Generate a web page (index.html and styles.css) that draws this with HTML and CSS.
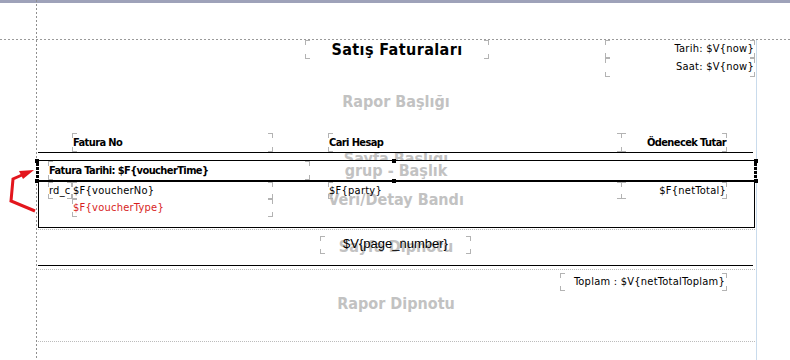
FILE: index.html
```html
<!DOCTYPE html>
<html lang="tr">
<head>
  <meta charset="UTF-8">
  <title>Satış Faturaları - Rapor Tasarımı</title>
  <link rel="stylesheet" href="styles.css">
</head>
<body>

<div class="designer">
  <div class="topbar"></div>

  <!-- kenar boşluğu kılavuzları -->
  <div class="guide guide-v"></div>
  <div class="guide guide-h"></div>

  <!-- grup bandı taşıma oku -->
  <svg class="move-arrow" width="40" height="60" viewBox="0 160 40 60">
    <polyline points="35,211 11,201 13,179 22,175" fill="none" stroke="#e3161d" stroke-width="3" stroke-linejoin="miter"/>
    <polygon points="34,170 19,171 23,179" fill="#e3161d"/>
  </svg>

  <div class="page">

    <!-- Rapor Başlığı -->
    <section class="band band-title">
      <div class="wm">Rapor Başlığı</div>
      <div class="fld f-title">Satış Faturaları</div>
      <div class="fld f-date1 right">Tarih: $V{now}</div>
      <div class="fld f-date2 right">Saat: $V{now}</div>
    </section>

    <!-- Sayfa Başlığı -->
    <section class="band band-pagehead">
      <div class="wm">Sayfa Başlığı</div>
      <div class="fld bold col-no">Fatura No</div>
      <div class="fld bold col-party">Cari Hesap</div>
      <div class="fld bold col-total right">Ödenecek Tutar</div>
      <div class="rule"></div>
    </section>

    <!-- grup - Başlık (seçili) -->
    <section class="band band-group">
      <div class="wm">grup - Başlık</div>
      <div class="fld bold f-group">Fatura Tarihi: $F{voucherTime}</div>
      <div class="sel">
        <span class="hd tl"></span><span class="hd tm"></span><span class="hd tr"></span>
        <span class="hd bl"></span><span class="hd bm"></span><span class="hd br"></span>
      </div>
    </section>

    <!-- Veri/Detay Bandı -->
    <section class="band band-detail">
      <div class="wm">Veri/Detay Bandı</div>
      <div class="fld f-rdc">rd_c</div>
      <div class="fld col-no">$F{voucherNo}</div>
      <div class="fld col-no f-type">$F{voucherType}</div>
      <div class="fld col-party">$F{party}</div>
      <div class="fld col-total right">$F{netTotal}</div>
    </section>

    <!-- Sayfa Dipnotu -->
    <section class="band band-pagefoot">
      <div class="wm">Sayfa Dipnotu</div>
      <div class="fld f-pageno">$V{page_number}</div>
      <div class="rule"></div>
    </section>

    <!-- Rapor Dipnotu -->
    <section class="band band-summary">
      <div class="wm">Rapor Dipnotu</div>
      <div class="fld f-sum right">Toplam : $V{netTotalToplam}</div>
    </section>

  </div>
</div>

</body>
</html>
```

FILE: styles.css
```css
body { margin: 0; background: #fff; font-family: "DejaVu Sans Condensed", "DejaVu Sans", sans-serif; }

.designer { position: relative; width: 790px; height: 360px; overflow: hidden; background: #fff; }
.topbar { height: 3px; background: #9ea2b9; }

.guide { position: absolute; }
.guide-v {
  left: 36px; top: 0; bottom: 0; width: 1px;
  background: repeating-linear-gradient(to bottom, #8f8f8f 0 2px, transparent 2px 4px);
}
.guide-h {
  left: 0; right: 0; top: 39px; height: 1px;
  background: repeating-linear-gradient(to right, #9a9a9a 0 2px, transparent 2px 4px);
}
.move-arrow { position: absolute; left: 0; top: 160px; z-index: 5; }

.page {
  margin: 37px 0 0 37px;
  width: 719px;
  height: 320px;
  border-right: 1px solid #c9dbec;
}

.band {
  position: relative;
  margin-left: 1px;
  width: 717px;
  box-sizing: border-box;
  background: #fff;
}
.band-title { height: 88px; }
.band-pagehead { height: 32px; }
.band-group { height: 22px; border-top: 1px solid #000; border-bottom: 2px solid #000; }
.band-detail { height: 46px; border: 1px solid #000; border-top: 0; }
.band-pagefoot { height: 40px; margin-top: 1px; border-top: 1px dotted #bcbcbc; }
.band-summary { height: 73px; border-top: 1px dotted #bcbcbc; border-bottom: 1px dotted #bcbcbc; }

/* bant adı filigranı */
.wm {
  position: absolute;
  left: -1px; right: 0;
  text-align: center;
  font: bold 16px/19px "DejaVu Sans Condensed", "DejaVu Sans", sans-serif;
  color: #c2c2c2;
  white-space: nowrap;
}
.band-title .wm { top: 52px; }
.band-pagehead .wm { top: 21px; }
.band-group .wm { top: 0; }
.band-detail .wm { top: 8px; }
.band-pagefoot .wm { top: 7px; }
.band-summary .wm { top: 24px; }

.rule { position: absolute; left: 0; width: 715px; height: 1px; background: #000; }
.band-pagehead .rule { top: 24px; }
.band-pagefoot .rule { top: 35px; }

/* rapor alanı: köşe işaretli kutu */
.fld {
  --m: #b3b3b3;
  position: absolute;
  height: 18px;
  box-sizing: border-box;
  padding: 0 1px;
  font-size: 11px;
  line-height: 18px;
  letter-spacing: 0.25px;
  color: #000;
  white-space: nowrap;
  overflow: hidden;
  background:
    linear-gradient(var(--m), var(--m)) left top / 5px 1px no-repeat,
    linear-gradient(var(--m), var(--m)) left top / 1px 5px no-repeat,
    linear-gradient(var(--m), var(--m)) right top / 5px 1px no-repeat,
    linear-gradient(var(--m), var(--m)) right top / 1px 5px no-repeat,
    linear-gradient(var(--m), var(--m)) left bottom / 5px 1px no-repeat,
    linear-gradient(var(--m), var(--m)) left bottom / 1px 5px no-repeat,
    linear-gradient(var(--m), var(--m)) right bottom / 5px 1px no-repeat,
    linear-gradient(var(--m), var(--m)) right bottom / 1px 5px no-repeat;
}
.fld.bold { font-weight: bold; letter-spacing: -0.6px; }
.fld.right { text-align: right; }

.f-title { left: 267px; top: 0; width: 184px; height: 19px; line-height: 19px; text-align: center; font-size: 16px; font-weight: bold; letter-spacing: 0.4px; }
.f-date1 { left: 567px; top: 0; width: 150px; }
.f-date2 { left: 567px; top: 18px; width: 150px; height: 19px; }

.band-pagehead .fld { top: 5px; height: 19px; line-height: 19px; }
.col-no { left: 34px; width: 201px; }
.col-party { left: 290px; width: 294px; }
.col-total { left: 583px; width: 106px; }

.f-group { left: 10px; top: 0; width: 262px; height: 19px; line-height: 19px; }

.band-detail .fld { top: 0; height: 17px; line-height: 17px; }
.band-detail .col-no { left: 33px; }
.band-detail .col-party { left: 289px; }
.band-detail .col-total { left: 582px; }
.band-detail .f-rdc { left: 9px; width: 24px; padding-right: 0; }
.band-detail .f-type { top: 17px; height: 18px; line-height: 18px; color: #d81e1e; }

.f-pageno {
  left: 282px; top: 6px; width: 151px;
  text-align: center;
  letter-spacing: 0;
  font: 13px/16px "Liberation Sans", Arial, sans-serif;
}
.f-sum { left: 522px; top: 3px; width: 167px; padding-right: 2px; }

/* seçim çerçevesi ve tutamaçlar */
.sel {
  position: absolute;
  left: -2px; right: -2px; top: -1px; bottom: -2px;
  z-index: 3;
}
.sel::before, .sel::after {
  content: "";
  position: absolute;
  top: 3px; bottom: 3px; width: 3px;
  background: repeating-linear-gradient(to bottom, #000 0 3px, transparent 3px 4px);
}
.sel::before { left: 0; }
.sel::after { right: 0; }
.hd { position: absolute; width: 4px; height: 4px; background: #000; }
.hd.tl, .hd.bl { left: -1px; }
.hd.tr, .hd.br { right: -1px; }
.hd.tm, .hd.bm { left: 356px; }
.hd.tl, .hd.tm, .hd.tr { top: -1px; }
.hd.bl, .hd.bm, .hd.br { bottom: -1px; }
```
